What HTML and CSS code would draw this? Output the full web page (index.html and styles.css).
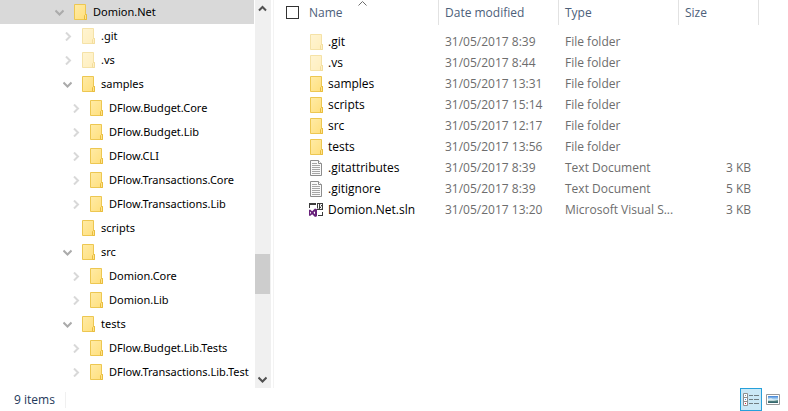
FILE: index.html
```
<!DOCTYPE html>
<html lang="en">
<head>
<meta charset="utf-8">
<title>Domion.Net</title>
<link rel="stylesheet" href="styles.css">
</head>
<body>
<svg class="sprites" aria-hidden="true">
  <defs>
    <linearGradient id="paper" x1="0" y1="0" x2="1" y2="1">
      <stop offset="0" stop-color="#ffeba6"/>
      <stop offset="1" stop-color="#ffdf7c"/>
    </linearGradient>
    <linearGradient id="sky" x1="0" y1="0" x2="0" y2="1">
      <stop offset="0" stop-color="#3f83d8"/>
      <stop offset="0.5" stop-color="#c2e2f5"/>
      <stop offset="0.65" stop-color="#5d8b86"/>
      <stop offset="1" stop-color="#2d6069"/>
    </linearGradient>
  </defs>
  <symbol id="folder" viewBox="0 0 13 16">
    <path d="M.5 .5h11v10h1v5H.5z" fill="url(#paper)" stroke="#edc751"/>
    <path d="M10.5 15.500v-4l1-1h1v5z" fill="#ffe38c" stroke="#e9bd3d"/>
  </symbol>
  <symbol id="right" viewBox="0 0 9 9">
    <path d="M3 0.500l4 4-4 4" fill="none" stroke="currentColor" stroke-width="2"/>
  </symbol>
  <symbol id="down" viewBox="0 0 9 9">
    <path d="M.5 2.500l4 4 4-4" fill="none" stroke="currentColor" stroke-width="2"/>
  </symbol>
  <symbol id="up" viewBox="0 0 9 9">
    <path d="M1 6.500l3.500-3.500L8 6.500" fill="none" stroke="currentColor" stroke-width="2"/>
  </symbol>
  <symbol id="text" viewBox="0 0 13 16">
    <path d="M.5 .5h8l3 3v12H.5z" fill="#fafafa" stroke="#8c8c8c"/>
    <path d="M8.500 .5v3h3" fill="#fff" stroke="#8c8c8c"/>
    <path d="M2 3.500h5M2 5.500h8M2 7.500h8M2 9.500h8M2 11.500h8M2 13.500h8" stroke="#a6a6a6"/>
  </symbol>
  <symbol id="solution" viewBox="0 0 15 14">
    <path d="M0 0h7v2H0zM0 2h1v3H0zM13 9h1v4h-1zM9 12h5v1H9z" fill="#3c3c3c"/>
    <path d="M8 0h6v7H8z" fill="#3c3c3c"/>
    <path d="M9.500 1v4.500H8.500M13 1.500h-1.500v2h1v2H11" fill="none" stroke="#fff"/>
    <path d="M0 7l1-.5 2.200 1.800L6 5.500l2 .8v7l-2 .7-2.800-2.700L1 13l-1-.5zM1 8.600v2.300l1.200-1.200zM4.500 9.800L6 11.200V8.300z" fill="#68217a" fill-rule="evenodd"/>
  </symbol>
</svg>

<div class="explorer">
  <main class="panes">
    <nav class="tree" aria-label="Folders">
      <ul>
        <li><div class="node root current"><button class="toggle open" aria-label="Collapse Domion.Net"><svg><use href="#down"/></svg></button><svg class="icon"><use href="#folder"/></svg><a href="#">Domion.Net</a></div>
          <ul class="level-1">
            <li><div class="node hidden-item"><button class="toggle" aria-label="Expand .git"><svg><use href="#right"/></svg></button><svg class="icon"><use href="#folder"/></svg><a href="#">.git</a></div></li>
            <li><div class="node hidden-item"><button class="toggle" aria-label="Expand .vs"><svg><use href="#right"/></svg></button><svg class="icon"><use href="#folder"/></svg><a href="#">.vs</a></div></li>
            <li><div class="node"><button class="toggle open" aria-label="Collapse samples"><svg><use href="#down"/></svg></button><svg class="icon"><use href="#folder"/></svg><a href="#">samples</a></div>
              <ul class="level-2">
                <li><div class="node"><button class="toggle" aria-label="Expand DFlow.Budget.Core"><svg><use href="#right"/></svg></button><svg class="icon"><use href="#folder"/></svg><a href="#">DFlow.Budget.Core</a></div></li>
                <li><div class="node"><button class="toggle" aria-label="Expand DFlow.Budget.Lib"><svg><use href="#right"/></svg></button><svg class="icon"><use href="#folder"/></svg><a href="#">DFlow.Budget.Lib</a></div></li>
                <li><div class="node"><button class="toggle" aria-label="Expand DFlow.CLI"><svg><use href="#right"/></svg></button><svg class="icon"><use href="#folder"/></svg><a href="#">DFlow.CLI</a></div></li>
                <li><div class="node"><button class="toggle" aria-label="Expand DFlow.Transactions.Core"><svg><use href="#right"/></svg></button><svg class="icon"><use href="#folder"/></svg><a href="#">DFlow.Transactions.Core</a></div></li>
                <li><div class="node"><button class="toggle" aria-label="Expand DFlow.Transactions.Lib"><svg><use href="#right"/></svg></button><svg class="icon"><use href="#folder"/></svg><a href="#">DFlow.Transactions.Lib</a></div></li>
              </ul>
            </li>
            <li><div class="node"><span class="toggle"></span><svg class="icon"><use href="#folder"/></svg><a href="#">scripts</a></div></li>
            <li><div class="node"><button class="toggle open" aria-label="Collapse src"><svg><use href="#down"/></svg></button><svg class="icon"><use href="#folder"/></svg><a href="#">src</a></div>
              <ul class="level-2">
                <li><div class="node"><button class="toggle" aria-label="Expand Domion.Core"><svg><use href="#right"/></svg></button><svg class="icon"><use href="#folder"/></svg><a href="#">Domion.Core</a></div></li>
                <li><div class="node"><button class="toggle" aria-label="Expand Domion.Lib"><svg><use href="#right"/></svg></button><svg class="icon"><use href="#folder"/></svg><a href="#">Domion.Lib</a></div></li>
              </ul>
            </li>
            <li><div class="node"><button class="toggle open" aria-label="Collapse tests"><svg><use href="#down"/></svg></button><svg class="icon"><use href="#folder"/></svg><a href="#">tests</a></div>
              <ul class="level-2">
                <li><div class="node"><button class="toggle" aria-label="Expand DFlow.Budget.Lib.Tests"><svg><use href="#right"/></svg></button><svg class="icon"><use href="#folder"/></svg><a href="#">DFlow.Budget.Lib.Tests</a></div></li>
                <li><div class="node"><button class="toggle" aria-label="Expand DFlow.Transactions.Lib.Test"><svg><use href="#right"/></svg></button><svg class="icon"><use href="#folder"/></svg><a href="#">DFlow.Transactions.Lib.Test</a></div></li>
              </ul>
            </li>
          </ul>
        </li>
      </ul>
    </nav>

    <div class="scrollbar">
      <button aria-label="Scroll up"><svg><use href="#up"/></svg></button>
      <span class="before"></span>
      <span class="thumb"></span>
      <span class="after"></span>
      <button aria-label="Scroll down"><svg><use href="#down"/></svg></button>
    </div>

    <section class="files">
      <table>
        <colgroup><col class="col-name"><col class="col-text"><col class="col-text"><col class="col-size"><col></colgroup>
        <thead>
          <tr>
            <th aria-sort="ascending"><div class="name-head"><input type="checkbox" aria-label="Select all"><button>Name</button><svg class="sort" viewBox="0 0 9 5"><path d="M.5 4.500l4-4 4 4" fill="none" stroke="#6d6d6d"/></svg></div></th>
            <th><button>Date modified</button></th>
            <th><button>Type</button></th>
            <th><button>Size</button></th>
            <td></td>
          </tr>
        </thead>
        <tbody>
          <tr class="hidden-item"><td><div class="file"><svg class="icon"><use href="#folder"/></svg><a href="#">.git</a></div></td><td>31/05/2017 8:39</td><td>File folder</td><td></td><td></td></tr>
          <tr class="hidden-item"><td><div class="file"><svg class="icon"><use href="#folder"/></svg><a href="#">.vs</a></div></td><td>31/05/2017 8:44</td><td>File folder</td><td></td><td></td></tr>
          <tr><td><div class="file"><svg class="icon"><use href="#folder"/></svg><a href="#">samples</a></div></td><td>31/05/2017 13:31</td><td>File folder</td><td></td><td></td></tr>
          <tr><td><div class="file"><svg class="icon"><use href="#folder"/></svg><a href="#">scripts</a></div></td><td>31/05/2017 15:14</td><td>File folder</td><td></td><td></td></tr>
          <tr><td><div class="file"><svg class="icon"><use href="#folder"/></svg><a href="#">src</a></div></td><td>31/05/2017 12:17</td><td>File folder</td><td></td><td></td></tr>
          <tr><td><div class="file"><svg class="icon"><use href="#folder"/></svg><a href="#">tests</a></div></td><td>31/05/2017 13:56</td><td>File folder</td><td></td><td></td></tr>
          <tr><td><div class="file"><svg class="icon"><use href="#text"/></svg><a href="#">.gitattributes</a></div></td><td>31/05/2017 8:39</td><td>Text Document</td><td class="size">3 KB</td><td></td></tr>
          <tr><td><div class="file"><svg class="icon"><use href="#text"/></svg><a href="#">.gitignore</a></div></td><td>31/05/2017 8:39</td><td>Text Document</td><td class="size">5 KB</td><td></td></tr>
          <tr><td><div class="file"><svg class="icon solution"><use href="#solution"/></svg><a href="#">Domion.Net.sln</a></div></td><td>31/05/2017 13:20</td><td>Microsoft Visual S...</td><td class="size">3 KB</td><td></td></tr>
        </tbody>
      </table>
    </section>
  </main>

  <footer class="status">
    <span class="count">9 items</span>
    <div class="views">
      <button class="view active" aria-label="Details view"><svg width="16" height="13" viewBox="0 0 16 13">
        <path d="M.5 .5h4v12h-4zM.5 4.500h4M.5 8.500h4" fill="#fff" stroke="#8f8f8f"/>
        <path d="M2 2h1v1H2z" fill="#7c9bb0"/><path d="M2 6h1v1H2z" fill="#3b8de0"/><path d="M2 10h1v1H2z" fill="#e0182d"/>
        <path d="M6 2.500h4M11 2.500h5M6 6.500h4M11 6.500h5M6 10.500h4M11 10.500h5" stroke="#707d82"/>
      </svg></button>
      <button class="view" aria-label="Large icons view"><svg width="14" height="11" viewBox="0 0 14 11">
        <path d="M.5 .5h13v10H.5z" fill="#fff" stroke="#999"/>
        <path d="M2 2h10v7H2z" fill="url(#sky)"/>
        <path d="M2 5l3-1 3 2 4 1H2z" fill="#e6f3f5" opacity=".7"/>
      </svg></button>
    </div>
  </footer>
</div>
</body>
</html>
```
FILE: styles.css
```
* { box-sizing: border-box; }

body {
  margin: 0;
  background: #fff;
  color: #000;
  font: 12px/16px "Open Sans", "Noto Sans", sans-serif;
}

ul { margin: 0; padding: 0; list-style: none; }
a { color: inherit; text-decoration: none; white-space: nowrap; }
button { padding: 0; border: 0; background: none; color: inherit; font: inherit; }
svg { display: block; flex: none; }

.sprites { position: absolute; width: 0; height: 0; }

.explorer { display: flex; flex-direction: column; height: 100vh; }

.panes {
  flex: 1;
  min-height: 0;
  display: grid;
  grid-template-columns: 254px 16px 1fr;
  column-gap: 1px;
}

.icon { width: 13px; height: 16px; }
.hidden-item .icon { opacity: .5; }

/* Folder tree */
.tree { overflow: hidden; font-family: "Noto Sans", sans-serif; font-size: 11px; }
.node { display: flex; align-items: center; height: 24px; padding-left: 55px; }
.node a { margin-left: 6px; }
.level-1 .node { padding-left: 63px; }
.level-2 .node { padding-left: 71px; }
.current { background: #d9d9d9; }
.toggle { flex: none; width: 9px; margin-right: 10px; color: #d8d8d8; }
.toggle.open { color: #ababab; }
.toggle svg { width: 9px; height: 9px; }

/* Scroll bar */
.scrollbar { display: flex; flex-direction: column; background: #f0f0f0; color: #505050; }
.scrollbar button { height: 17px; padding-right: 1px; display: grid; place-items: center; }
.scrollbar svg { width: 9px; height: 9px; }
.before { flex: 237; }
.thumb { height: 40px; margin-right: 1px; background: #cdcdcd; }
.after { flex: 77; }

/* File list */
.files { border-left: 1px solid #f3f3f3; margin-left: 1px; min-width: 0; }
table { width: 100%; table-layout: fixed; border-spacing: 0; }
.col-name { width: 165px; }
.col-text { width: 120px; }
.col-size { width: 80px; }
th, td { padding: 0 0 0 6px; text-align: left; font-weight: normal; white-space: nowrap; }
th { height: 25px; border-right: 1px solid #e2e2e2; color: #4c607a; }
th:first-child { padding-left: 12px; }
.name-head { position: relative; display: flex; align-items: center; gap: 10px; }
.name-head input {
  appearance: none;
  width: 13px;
  height: 13px;
  margin: 0;
  border: 1px solid #333;
  background: #fff;
}
.sort { position: absolute; top: -4px; left: 72px; width: 9px; height: 5px; }
tbody::before { content: ""; display: block; height: 6px; }
tbody td { height: 21px; color: #6d6d6d; }
tbody td:first-child { padding-left: 36px; color: #000; }
tbody .size { padding-right: 8px; text-align: right; }
.file { display: flex; align-items: center; gap: 5px; }
.solution { width: 15px; height: 14px; margin: 0 -1px; }

/* Status bar */
.status { display: flex; justify-content: space-between; align-items: center; height: 23px; }
.count { padding: 0 10px 0 14px; border-right: 1px solid #f0f0f0; color: #1e395b; }
.views { display: flex; margin-right: 4px; }
.view { display: grid; place-items: center; width: 22px; height: 23px; }
.active { border: 1px solid #26a0da; background: #cbe8f6; }
```
